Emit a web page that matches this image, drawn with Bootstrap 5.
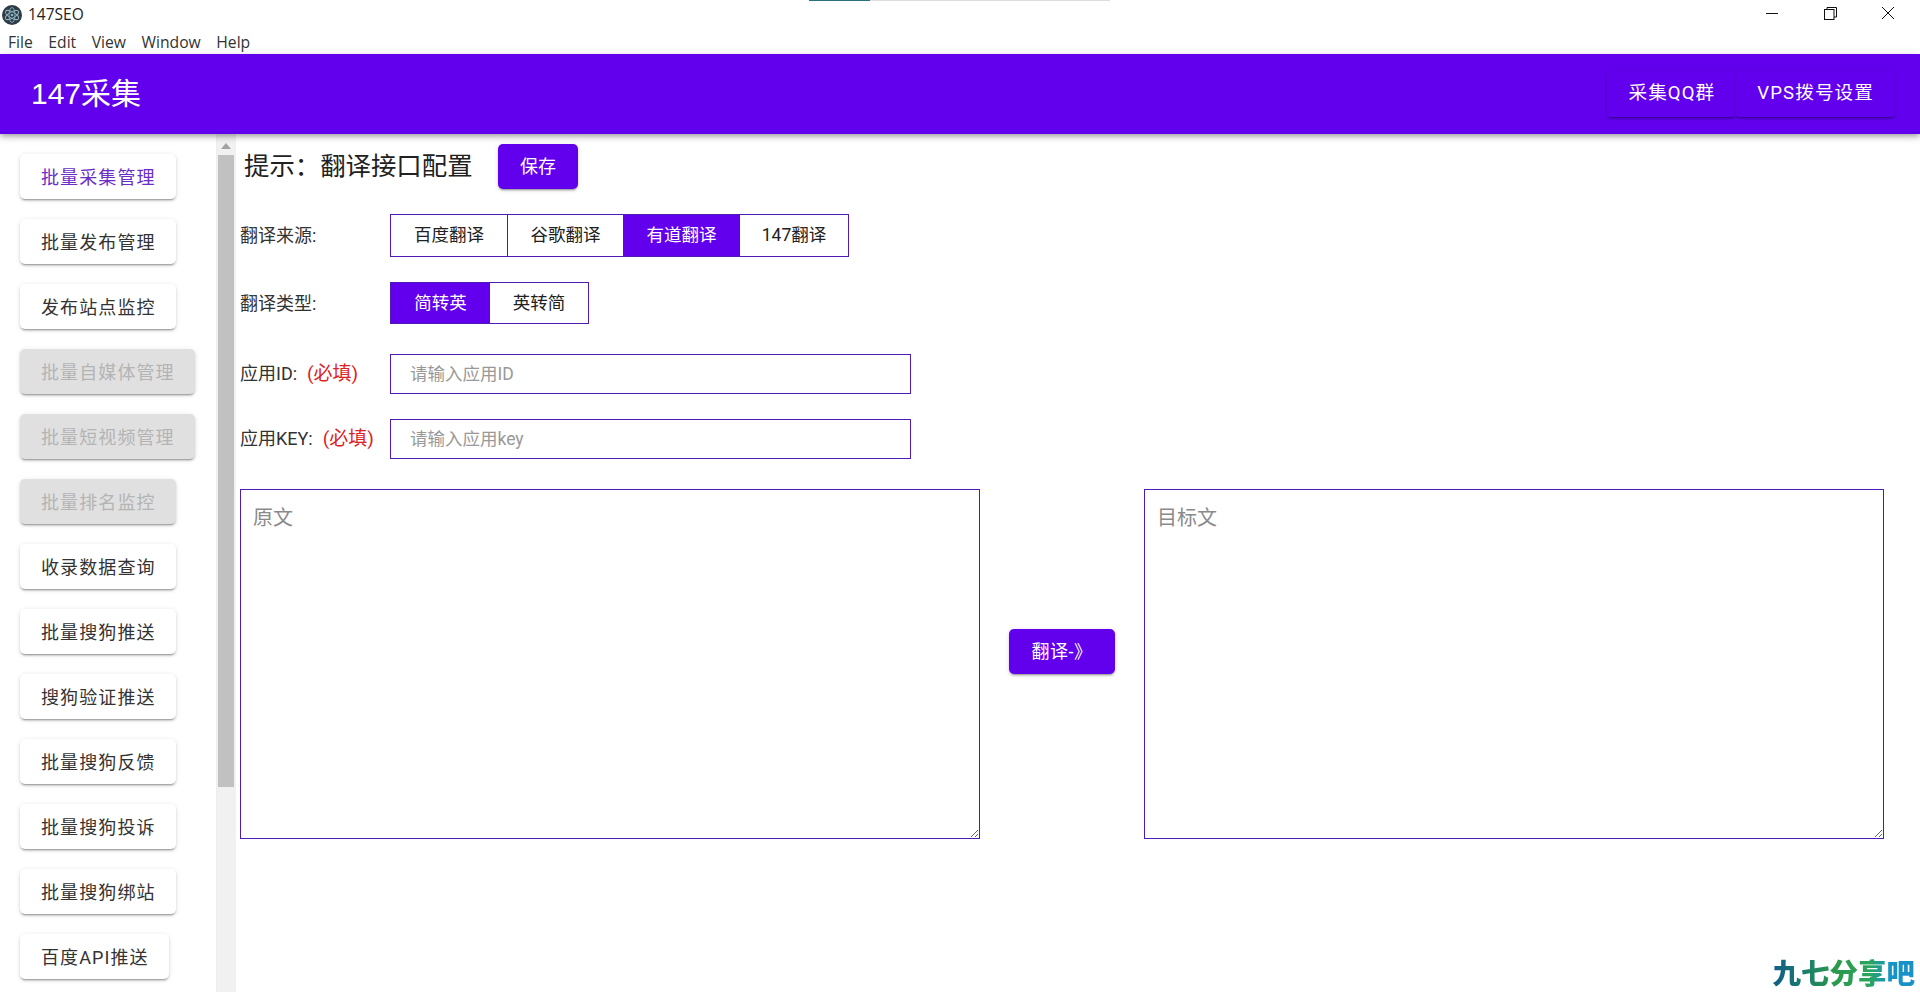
<!DOCTYPE html>
<html lang="zh">
<head>
<meta charset="utf-8">
<title>147SEO</title>
<link href="https://cdn.jsdelivr.net/npm/bootstrap@5.3.0/dist/css/bootstrap.min.css" rel="stylesheet">
<style>
:root{--pv:#6200ee;--pl:#4f1bb4;}
html,body{height:100%;overflow:hidden;background:#fff;}
body{font-family:Roboto,"Noto Sans CJK SC",sans-serif;color:#212121;}
.app-shell{height:992px;position:relative;}
.topline{position:absolute;left:809px;top:0;width:301px;height:1px;background:#ddd;}
.topline span{display:block;width:61px;height:1px;background:#2b6f80;}
.win-title{height:30px;font-family:"Open Sans","Noto Sans",sans-serif;font-size:15.5px;color:#222;padding:0 3px 0 2px;}
.win-title .ttl{margin-left:6px;}
.win-ctrl button{width:58px;height:30px;padding:0;border:0;background:none;display:flex;align-items:center;justify-content:center;margin-top:-4px;}
.menu-line{height:24px;font-family:"Open Sans","Noto Sans",sans-serif;font-size:15.7px;color:#333;padding-left:8px;gap:15.5px;line-height:25px;}
.hdr{height:80px;background:var(--pv);color:#fff;padding:0 25px 0 31px;box-shadow:0 2px 4px -1px rgba(0,0,0,.2),0 4px 5px 0 rgba(0,0,0,.14),0 1px 10px 0 rgba(0,0,0,.12);position:relative;z-index:3;}
.hdr-name{font-size:30px;line-height:1;font-family:"Liberation Sans","Noto Sans CJK SC",sans-serif;}
.hdr-btn{background:var(--pv);color:#fff;border:0;height:46px;padding:0 21px;font-size:18.6px;letter-spacing:1.1px;border-radius:4px;box-shadow:0 3px 1px -2px rgba(0,0,0,.2),0 2px 2px 0 rgba(0,0,0,.14),0 1px 5px 0 rgba(0,0,0,.12);font-family:inherit;}
.hdr-btn:hover,.hdr-btn:active{background:var(--pv)!important;color:#fff!important;}
.work{height:858px;overflow:hidden;}
.side{width:216px;flex:none;padding:20px 0 0 20px;gap:20px;overflow:hidden;}
.side-btn{height:45px;flex:none;padding:2px 20px 0 21px;background:#fff;color:#333;border:0;border-radius:5px;font-size:18px;letter-spacing:1.1px;white-space:nowrap;box-shadow:0 3px 1px -2px rgba(0,0,0,.2),0 2px 2px 0 rgba(0,0,0,.14),0 1px 5px 0 rgba(0,0,0,.12);}
.side-btn.is-cur{color:#6a2dc8;}
.side-btn:disabled{background:#e0e0e0;color:#b4b4b4;opacity:1;}
.sbar{width:20px;flex:none;background:#f1f1f1;border-left:1px solid #eee;padding:0 2px 0 1px;}
.sbar-up{width:0;height:0;margin:9px auto 6px;border:5px solid transparent;border-top:0;border-bottom:6px solid #a3a3a3;}
.sbar-th{height:632px;background:#c1c1c1;}
.pane{flex:1;min-width:0;padding:10px 36px 0 4px;}
.tip-row{height:45px;padding-left:4px;}
.tip-txt{font-size:25.4px;width:254px;color:#212121;white-space:nowrap;}
.fill-btn{background:var(--pv);color:#fff;border:0;border-radius:5px;height:45px;font-size:18px;padding:0;box-shadow:0 3px 1px -2px rgba(0,0,0,.2),0 2px 2px 0 rgba(0,0,0,.14),0 1px 5px 0 rgba(0,0,0,.12);}
.fill-btn:hover,.fill-btn:active{background:var(--pv)!important;color:#fff!important;}
.fill-save{width:80px;}
.fill-go{width:106px;flex:none;margin-bottom:26px;align-self:center;letter-spacing:.5px;}
.opt-row{margin-top:25px;}
.row-id{margin-top:30px;}
.row-key{margin-top:25px;}
.opt-lbl{width:150px;flex:none;font-size:18px;color:#333;white-space:nowrap;}
.req{color:#d22;margin-left:10px;font-size:19px;}
.seg{border:1px solid var(--pl);display:flex;}
.seg-one{height:41px;font-size:17.5px;color:#212121;display:flex;align-items:center;justify-content:center;background:#fff;white-space:nowrap;}
.seg-one+.seg-one.lined{border-left:1px solid var(--pl);}
.seg-one.on{background:var(--pv);color:#fff;}
.seg-a{height:43px;}
.seg-a .w1{width:116px;}.seg-a .w2{width:116px;}.seg-a .w3{width:117px;}.seg-a .w4{width:108px;}
.seg-b .seg-one{height:40px;}
.seg-b{height:42px;}
.seg-b .w5{width:99px;}.seg-b .w6{width:98px;}
.txt-in.form-control{width:521px;height:40px;border:1px solid var(--pl);border-radius:0;padding:0 19px;font-size:17.5px;color:#212121;box-shadow:none;font-family:inherit;}
.txt-in::placeholder{color:#999;opacity:1;}
.areas{margin-top:30px;height:350px;gap:29px;}
.txt-big.form-control{width:740px;flex:none;height:350px;border:1px solid var(--pl);border-radius:0;padding:13px 12px;font-size:20px;box-shadow:none;font-family:inherit;resize:both;}
.txt-big::placeholder{color:#8a8a8a;opacity:1;}
.mark-wm{position:absolute;right:5px;bottom:2px;font-family:"Noto Sans CJK SC",sans-serif;font-weight:900;font-size:28.5px;line-height:36px;letter-spacing:0;background:linear-gradient(90deg,#0f5c8a 0%,#1b7c6c 22%,#2b9a4c 45%,#2ca45c 68%,#1594c4 82%,#1a90c8 100%);-webkit-background-clip:text;background-clip:text;color:transparent;white-space:nowrap;}
</style>
</head>
<body>
<div class="app-shell d-flex flex-column">
  <div class="topline"><span></span></div>
  <div class="win-title d-flex align-items-center justify-content-between">
    <div class="d-flex align-items-center">
      <svg width="20" height="20" viewBox="0 0 20 20" fill="none" stroke="#8fb6c4" stroke-width=".9"><circle cx="10" cy="10" r="10" fill="#2f3b45" stroke="none"/><ellipse cx="10" cy="10" rx="7.5" ry="3" transform="rotate(30 10 10)"/><ellipse cx="10" cy="10" rx="7.5" ry="3" transform="rotate(90 10 10)"/><ellipse cx="10" cy="10" rx="7.5" ry="3" transform="rotate(150 10 10)"/><circle cx="10" cy="10" r="1.3" fill="#8fb6c4" stroke="none"/></svg>
      <span class="ttl">147SEO</span>
    </div>
    <div class="win-ctrl d-flex">
      <button type="button" aria-label="min"><svg width="14" height="12" viewBox="0 0 14 12"><path d="M1 6.5H13" stroke="#111" stroke-width="1"/></svg></button>
      <button type="button" aria-label="max"><svg width="13" height="13" viewBox="0 0 13 13" fill="none" stroke="#111"><rect x=".5" y="2.5" width="9.5" height="10"/><path d="M3 2.5V.5H12.5V10H10"/></svg></button>
      <button type="button" aria-label="close"><svg width="14" height="14" viewBox="0 0 14 14"><path d="M1 1L13 13M13 1L1 13" stroke="#111" stroke-width="1"/></svg></button>
    </div>
  </div>
  <div class="menu-line d-flex"><span>File</span><span>Edit</span><span>View</span><span>Window</span><span>Help</span></div>
  <header class="hdr d-flex align-items-center justify-content-between">
    <div class="hdr-name">147采集</div>
    <div class="d-flex">
      <button class="btn hdr-btn" type="button">采集QQ群</button>
      <button class="btn hdr-btn" type="button">VPS拨号设置</button>
    </div>
  </header>
  <div class="work d-flex">
    <nav class="side d-flex flex-column align-items-start">
      <button class="btn side-btn is-cur" type="button">批量采集管理</button>
      <button class="btn side-btn" type="button">批量发布管理</button>
      <button class="btn side-btn" type="button">发布站点监控</button>
      <button class="btn side-btn" type="button" disabled>批量自媒体管理</button>
      <button class="btn side-btn" type="button" disabled>批量短视频管理</button>
      <button class="btn side-btn" type="button" disabled>批量排名监控</button>
      <button class="btn side-btn" type="button">收录数据查询</button>
      <button class="btn side-btn" type="button">批量搜狗推送</button>
      <button class="btn side-btn" type="button">搜狗验证推送</button>
      <button class="btn side-btn" type="button">批量搜狗反馈</button>
      <button class="btn side-btn" type="button">批量搜狗投诉</button>
      <button class="btn side-btn" type="button">批量搜狗绑站</button>
      <button class="btn side-btn" type="button">百度API推送</button>
    </nav>
    <div class="sbar"><div class="sbar-up"></div><div class="sbar-th"></div></div>
    <main class="pane">
      <div class="tip-row d-flex align-items-center">
        <div class="tip-txt">提示：翻译接口配置</div>
        <button class="btn fill-btn fill-save" type="button">保存</button>
      </div>
      <div class="opt-row d-flex align-items-center">
        <div class="opt-lbl">翻译来源:</div>
        <div class="seg seg-a">
          <div class="seg-one w1">百度翻译</div>
          <div class="seg-one w2 lined">谷歌翻译</div>
          <div class="seg-one w3 on">有道翻译</div>
          <div class="seg-one w4">147翻译</div>
        </div>
      </div>
      <div class="opt-row d-flex align-items-center">
        <div class="opt-lbl">翻译类型:</div>
        <div class="seg seg-b">
          <div class="seg-one w5 on">简转英</div>
          <div class="seg-one w6">英转简</div>
        </div>
      </div>
      <div class="d-flex align-items-center row-id">
        <div class="opt-lbl">应用ID:<span class="req">(必填)</span></div>
        <input class="form-control txt-in" type="text" placeholder="请输入应用ID">
      </div>
      <div class="d-flex align-items-center row-key">
        <div class="opt-lbl">应用KEY:<span class="req">(必填)</span></div>
        <input class="form-control txt-in" type="text" placeholder="请输入应用key">
      </div>
      <div class="areas d-flex">
        <textarea class="form-control txt-big" placeholder="原文"></textarea>
        <button class="btn fill-btn fill-go" type="button">翻译-》</button>
        <textarea class="form-control txt-big" placeholder="目标文"></textarea>
      </div>
    </main>
  </div>
  <div class="mark-wm">九七分享吧</div>
</div>
<script src="https://cdn.jsdelivr.net/npm/bootstrap@5.3.0/dist/js/bootstrap.bundle.min.js"></script>
</body>
</html>
